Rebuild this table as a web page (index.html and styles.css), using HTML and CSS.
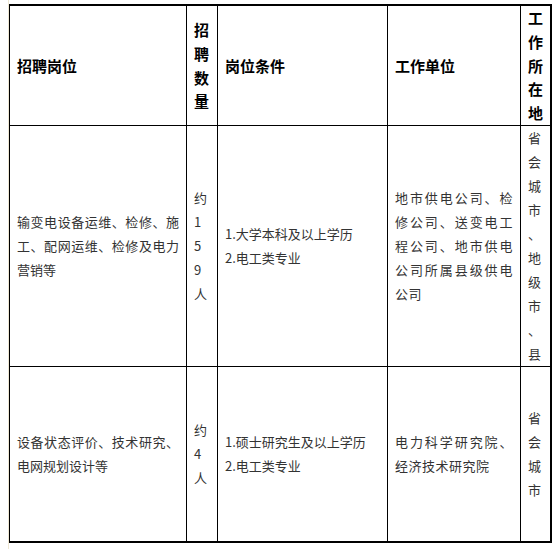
FILE: index.html
```html
<!DOCTYPE html>
<html lang="zh-CN">
<head>
<meta charset="utf-8">
<title>招聘岗位</title>
<link rel="stylesheet" href="styles.css">
</head>
<body>
<div class="page">
  <table class="jobs">
    <colgroup>
      <col class="c1"><col class="c2"><col class="c3"><col class="c4"><col class="c5">
    </colgroup>
    <thead>
      <tr class="head">
        <th>招聘岗位</th>
        <th class="narrow">招聘数量</th>
        <th>岗位条件</th>
        <th>工作单位</th>
        <th class="narrow last">工作所在地</th>
      </tr>
    </thead>
    <tbody>
      <tr class="r1">
        <td class="just">输变电设备运维、检修、施工、配网运维、检修及电力营销等</td>
        <td class="narrow">约<br>1<br>5<br>9<br>人</td>
        <td>1.大学本科及以上学历<br>2.电工类专业</td>
        <td class="just unit">地市供电公司、检修公司、送变电工程公司、地市供电公司所属县级供电公司</td>
        <td class="narrow last">省<br>会<br>城<br>市<br>、<br>地<br>级<br>市<br>、<br>县</td>
      </tr>
      <tr class="r2">
        <td class="just">设备状态评价、技术研究、电网规划设计等</td>
        <td class="narrow">约<br>4<br>人</td>
        <td>1.硕士研究生及以上学历<br>2.电工类专业</td>
        <td class="just unit">电力科学研究院、经济技术研究院</td>
        <td class="narrow last">省<br>会<br>城<br>市</td>
      </tr>
    </tbody>
  </table>
</div>
</body>
</html>
```

FILE: styles.css
```css
html, body {
  margin: 0;
  padding: 0;
  background: #fff;
}

.page {
  margin-left: 8px;
  border-left: 1px solid #eee7d3;
  height: 549px;
  box-sizing: border-box;
  padding-top: 4px;
  overflow: hidden;
}

.jobs {
  table-layout: fixed;
  border-collapse: separate;
  border-spacing: 0;
  width: 543px;
  border-top: 2px solid #000;
  border-right: 2px solid #000;
  border-bottom: 2px solid #000;
  border-left: 1px solid #000;
  font-family: "Noto Sans CJK SC", "Noto Sans", sans-serif;
  color: #333;
}

.c1 { width: 177px; }
.c2 { width: 31px; }
.c3 { width: 170px; }
.c4 { width: 133px; }
.c5 { width: 29px; }

.jobs th,
.jobs td {
  padding: 0 7px;
  border-right: 1px solid #000;
  border-bottom: 1px solid #000;
  vertical-align: middle;
  text-align: left;
  font-size: 13px;
  line-height: 24px;
}

.jobs th.last,
.jobs td.last {
  border-right: none;
}

.jobs tbody tr:last-child td {
  border-bottom: none;
}

.jobs th {
  font-size: 15px;
  font-weight: bold;
  color: #000;
  line-height: 23.8px;
}

.head th { height: 119px; }
.r1 td { height: 240px; }
.r2 td { height: 174px; }

.jobs .narrow {
  line-break: anywhere;
  word-break: break-all;
}

.jobs .just {
  text-align: justify;
}

.jobs .unit {
  letter-spacing: 0.5px;
}
```
